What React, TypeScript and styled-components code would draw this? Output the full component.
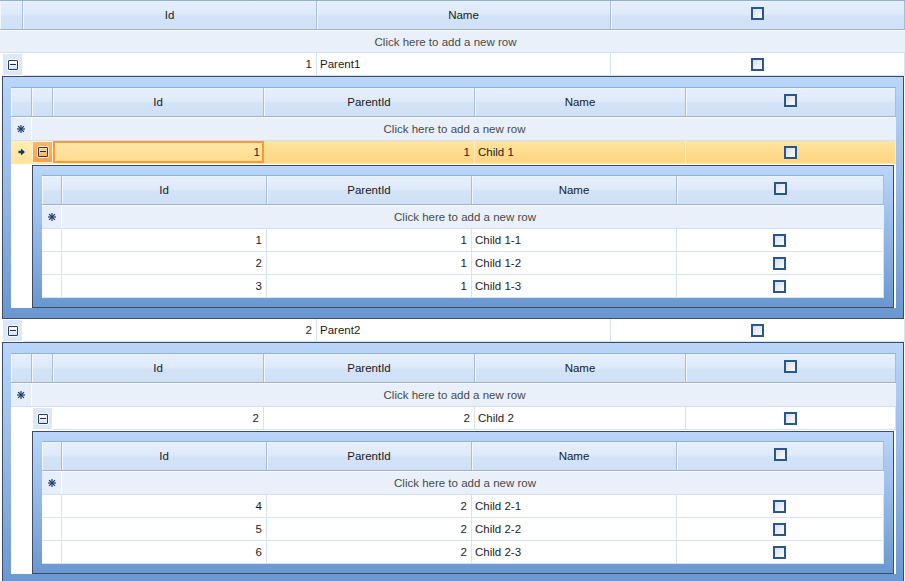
import React from 'react';
import styled, { createGlobalStyle, css } from 'styled-components';

const Global = createGlobalStyle`
  html, body { margin: 0; padding: 0; background: #ffffff; overflow: hidden; }
  body {
    font-family: "Liberation Sans", Arial, sans-serif;
    font-size: 11.5px;
    color: #1c1c1c;
    width: 905px;
    height: 581px;
  }
`;

type Align = 'left' | 'right' | 'center';

const COLS0 = '2px 21px 294px 294px 1fr';
const COLS1 = '21px 21px 211px 211px 211px 1fr';
const COLS2 = '20px 205px 205px 205px 1fr';

const Table = styled.div`
  display: flex;
  flex-direction: column;
  background: #ffffff;
`;

const HeaderRow = styled.div<{ $cols: string; $h?: number }>`
  display: grid;
  grid-template-columns: ${(p) => p.$cols};
  height: ${(p) => p.$h ?? 30}px;
  box-sizing: border-box;
  border-top: 1px solid #8db0dd;
  border-bottom: 1px solid #a2b3c8;
`;

const HeaderCell = styled.div<{ $span?: number }>`
  grid-column: span ${(p) => p.$span ?? 1};
  display: flex;
  align-items: center;
  justify-content: center;
  background: linear-gradient(to bottom, #e6effb 0%, #dfeafa 45%, #d3e3f7 55%, #cfe0f6 100%);
  border-right: 1px solid #a9bdd7;
  box-shadow: inset 1px 0 0 #f4f8fe, inset 0 1px 0 #eef4fd;
  color: #1b1b1b;
  padding-bottom: 1px;
`;

const NewRow = styled.div<{ $ind: number; $h: number }>`
  display: grid;
  grid-template-columns: ${(p) => p.$ind}px 1fr;
  height: ${(p) => p.$h}px;
  box-sizing: border-box;
  background: #e9f0fa;
  border-top: 1px solid #f6f9fe;
  border-bottom: 1px solid #d2e0f3;
`;

const NewRowText = styled.div<{ $shift?: number }>`
  display: flex;
  align-items: center;
  justify-content: center;
  color: #4a4a4a;
  margin-left: ${(p) => -(p.$shift ?? 0)}px;
`;

const StarCell = styled.div<{ $show: boolean }>`
  display: flex;
  align-items: center;
  justify-content: center;
  background: ${(p) => (p.$show ? '#e6eef9' : 'transparent')};
  border-right: ${(p) => (p.$show ? '1px solid #ffffff' : 'none')};
`;

const DataRow = styled.div<{ $cols: string; $selected?: boolean }>`
  display: grid;
  grid-template-columns: ${(p) => p.$cols};
  height: 23px;
  box-sizing: border-box;
  background: ${(p) =>
    p.$selected ? 'linear-gradient(to bottom, #ffe4a0 0%, #ffda8c 60%, #ffd584 100%)' : '#ffffff'};
  ${(p) =>
    p.$selected &&
    css`
      border-bottom: 1px solid #ffe7a6;
    `}
`;

const DataCell = styled.div<{ $align?: Align; $selected?: boolean; $current?: boolean }>`
  display: flex;
  align-items: center;
  justify-content: ${(p) =>
    p.$align === 'right' ? 'flex-end' : p.$align === 'center' ? 'center' : 'flex-start'};
  padding: 0 4px 0 3px;
  box-sizing: border-box;
  white-space: nowrap;
  overflow: hidden;
  ${(p) =>
    p.$current
      ? css`
          border: 2px solid #f9973b;
          background: linear-gradient(to bottom, #ffe6a6, #ffdc90);
          padding: 0 2px 0 1px;
        `
      : p.$selected
      ? css`
          border-right: 1px solid rgba(255, 246, 220, 0.6);
        `
      : css`
          border-right: 1px solid #d5e3f5;
          border-bottom: 1px solid #d5e3f5;
        `}
`;

const IndicatorCell = styled.div<{ $tone: 'blank' | 'plain' | 'selected' | 'expand' | 'expandSelected' }>`
  display: flex;
  align-items: center;
  justify-content: center;
  box-sizing: border-box;
  ${(p) => {
    switch (p.$tone) {
      case 'blank':
        return css`background: #ffffff;`;
      case 'plain':
        return css`
          background: #ffffff;
          border-right: 1px solid #d5e3f5;
          border-bottom: 1px solid #d5e3f5;
        `;
      case 'selected':
        return css`background: linear-gradient(to bottom, #ffeeb6, #ffe39c);`;
      case 'expand':
        return css`
          background: #dde8f7;
          border: 1px solid #ffffff;
        `;
      case 'expandSelected':
        return css`
          background: linear-gradient(to bottom, #ffb561, #ff9f45);
          border: 1px solid #fff2dc;
        `;
    }
  }}
`;

const ExpandButton = styled.span<{ $selected?: boolean }>`
  position: relative;
  display: block;
  width: 10px;
  height: 10px;
  box-sizing: border-box;
  border: 1px solid #263d60;
  border-radius: 1px;
  background: ${(p) =>
    p.$selected
      ? 'linear-gradient(to bottom, #ffd9a8, #ffb35e)'
      : 'linear-gradient(to bottom, #ffffff, #d6e2f3)'};
  box-shadow: 0 0 0 1px rgba(255, 255, 255, 0.7);
  &::after {
    content: '';
    position: absolute;
    left: 1px;
    right: 1px;
    top: 3px;
    height: 1px;
    background: #1d2f4d;
  }
`;

const CheckBox = styled.span`
  display: block;
  width: 13px;
  height: 13px;
  box-sizing: border-box;
  border: 2px solid #28568f;
  background: linear-gradient(135deg, #d9dde8 0%, #eef0f5 60%, #f8f9fb 100%);
`;

const HeaderCheck = styled(CheckBox)`
  margin-top: -3px;
`;

const DetailRow = styled.div<{ $cols: string }>`
  display: grid;
  grid-template-columns: ${(p) => p.$cols};
`;

const DetailSpacer = styled.div`
  background: #ffffff;
`;

const Panel = styled.div<{ $pad: string; $mr: number; $mt: number }>`
  grid-column: 2 / -1;
  border: 1px solid #3d4b66;
  background: linear-gradient(to bottom, #bad6f9 0%, #97bbe8 45%, #6a97d0 100%);
  padding: ${(p) => p.$pad};
  margin-right: ${(p) => p.$mr}px;
  margin-top: ${(p) => p.$mt}px;
`;

const Star = () => (
  <svg width="8" height="8" viewBox="0 0 8 8">
    <g stroke="#1d3d6f" strokeWidth="1.2" strokeLinecap="square">
      <line x1="4" y1="0.5" x2="4" y2="7.5" />
      <line x1="0.5" y1="4" x2="7.5" y2="4" />
      <line x1="1.5" y1="1.5" x2="6.5" y2="6.5" />
      <line x1="6.5" y1="1.5" x2="1.5" y2="6.5" />
    </g>
  </svg>
);

const Arrow = () => (
  <svg width="8" height="8" viewBox="0 0 8 8">
    <path d="M0.5 2.8H3V0.5L7 4L3 7.5V5.2H0.5Z" fill="#1b3462" />
  </svg>
);

type Leaf = { id: number; parent: number; name: string };

const LeafTable: React.FC<{ rows: Leaf[] }> = ({ rows }) => (
  <Table>
    <HeaderRow $cols={COLS2}>
      <HeaderCell />
      <HeaderCell>Id</HeaderCell>
      <HeaderCell>ParentId</HeaderCell>
      <HeaderCell>Name</HeaderCell>
      <HeaderCell>
        <HeaderCheck />
      </HeaderCell>
    </HeaderRow>
    <NewRow $ind={20} $h={24}>
      <StarCell $show>
        <Star />
      </StarCell>
      <NewRowText $shift={16}>Click here to add a new row</NewRowText>
    </NewRow>
    {rows.map((r) => (
      <DataRow key={r.id} $cols={COLS2}>
        <IndicatorCell $tone="plain" />
        <DataCell $align="right">{r.id}</DataCell>
        <DataCell $align="right">{r.parent}</DataCell>
        <DataCell>{r.name}</DataCell>
        <DataCell $align="center">
          <CheckBox />
        </DataCell>
      </DataRow>
    ))}
  </Table>
);

const ChildTable: React.FC<{ parent: number; selected: boolean }> = ({ parent, selected }) => {
  const leaves: Leaf[] = [1, 2, 3].map((n) => ({
    id: (parent - 1) * 3 + n,
    parent,
    name: `Child ${parent}-${n}`,
  }));
  return (
    <Table>
      <HeaderRow $cols={COLS1}>
        <HeaderCell />
        <HeaderCell />
        <HeaderCell>Id</HeaderCell>
        <HeaderCell>ParentId</HeaderCell>
        <HeaderCell>Name</HeaderCell>
        <HeaderCell>
          <HeaderCheck />
        </HeaderCell>
      </HeaderRow>
      <NewRow $ind={21} $h={24}>
        <StarCell $show>
          <Star />
        </StarCell>
        <NewRowText $shift={19}>Click here to add a new row</NewRowText>
      </NewRow>
      <DataRow $cols={COLS1} $selected={selected}>
        <IndicatorCell $tone={selected ? 'selected' : 'blank'}>{selected && <Arrow />}</IndicatorCell>
        <IndicatorCell $tone={selected ? 'expandSelected' : 'expand'}>
          <ExpandButton $selected={selected} />
        </IndicatorCell>
        <DataCell $align="right" $selected={selected} $current={selected}>
          {parent}
        </DataCell>
        <DataCell $align="right" $selected={selected}>
          {parent}
        </DataCell>
        <DataCell $selected={selected}>Child {parent}</DataCell>
        <DataCell $align="center" $selected={selected}>
          <CheckBox />
        </DataCell>
      </DataRow>
      <DetailRow $cols={COLS1}>
        <DetailSpacer />
        <Panel $pad="9px 9px 9px 9px" $mr={2} $mt={1}>
          <LeafTable rows={leaves} />
        </Panel>
      </DetailRow>
    </Table>
  );
};

const parents = [
  { id: 1, name: 'Parent1' },
  { id: 2, name: 'Parent2' },
];

export default function App() {
  return (
    <>
      <Global />
      <Table>
        <HeaderRow $cols={COLS0}>
          <HeaderCell $span={2} />
          <HeaderCell>Id</HeaderCell>
          <HeaderCell>Name</HeaderCell>
          <HeaderCell>
            <HeaderCheck />
          </HeaderCell>
        </HeaderRow>
        <NewRow $ind={0} $h={23}>
          <StarCell $show={false} />
          <NewRowText $shift={14}>Click here to add a new row</NewRowText>
        </NewRow>
        {parents.map((p) => (
          <React.Fragment key={p.id}>
            <DataRow $cols={COLS0}>
              <IndicatorCell $tone="blank" />
              <IndicatorCell $tone="expand">
                <ExpandButton />
              </IndicatorCell>
              <DataCell $align="right">{p.id}</DataCell>
              <DataCell>{p.name}</DataCell>
              <DataCell $align="center">
                <CheckBox />
              </DataCell>
            </DataRow>
            <DetailRow $cols={COLS0}>
              <DetailSpacer />
              <Panel $pad="10px 7px 10px 8px" $mr={1} $mt={0}>
                <ChildTable parent={p.id} selected={p.id === 1} />
              </Panel>
            </DetailRow>
          </React.Fragment>
        ))}
      </Table>
    </>
  );
}
